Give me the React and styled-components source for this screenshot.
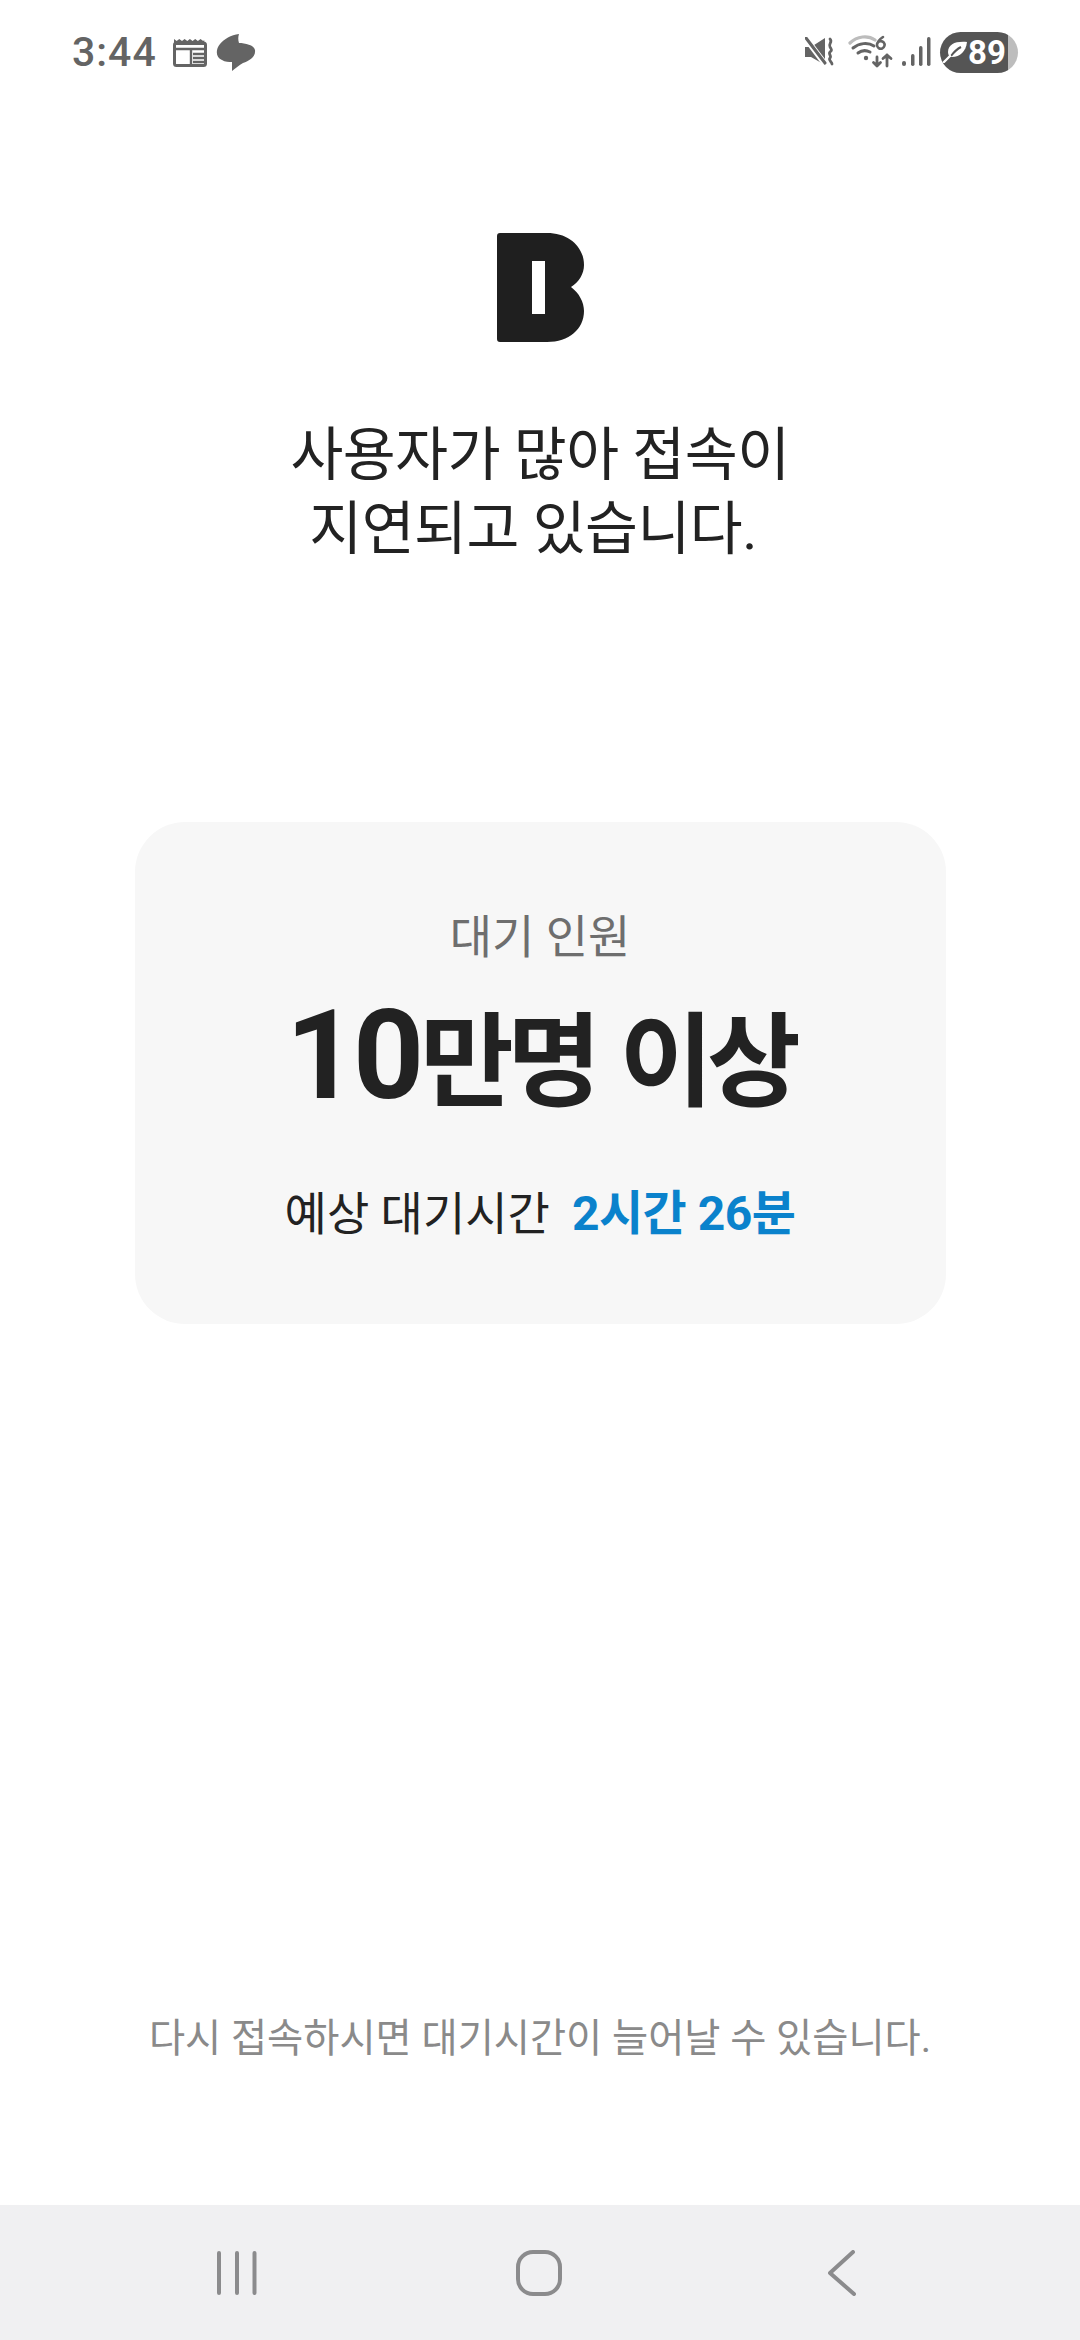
import styled, { createGlobalStyle } from "styled-components";

const GlobalStyle = createGlobalStyle`
  html, body {
    margin: 0;
    padding: 0;
    background: #fff;
  }
  * {
    box-sizing: border-box;
  }
`;

const Screen = styled.div`
  width: 1080px;
  height: 2340px;
  display: flex;
  flex-direction: column;
  background: #fff;
  font-family: Roboto, "Noto Sans CJK KR", sans-serif;
  overflow: hidden;
`;

const StatusBar = styled.header`
  height: 104px;
  display: flex;
  align-items: center;
  justify-content: space-between;
  padding: 0 62px 0 72px;
`;

const StatusGroup = styled.div`
  display: flex;
  align-items: center;
`;

const Time = styled.span`
  font-size: 41px;
  font-weight: 500;
  letter-spacing: 1px;
  color: #646464;
  margin-right: 16px;
`;

const Battery = styled.div`
  width: 78px;
  height: 41px;
  margin-left: 8px;
  border-radius: 21px;
  background: linear-gradient(90deg, #555 87%, #bdbdbd 87%);
  display: flex;
  align-items: center;
  padding-left: 3px;
  color: #fff;
  font-size: 33px;
  font-weight: 700;
`;

const Main = styled.main`
  flex: 1;
  display: flex;
  flex-direction: column;
  align-items: center;
  padding-top: 129px;
`;

const Title = styled.h1`
  margin: 77px 0 0;
  font-size: 57.5px;
  font-weight: 400;
  line-height: 74px;
  letter-spacing: -0.5px;
  text-align: center;
  color: #222;
`;

const Card = styled.section`
  width: 811px;
  height: 502px;
  margin-top: 255px;
  border-radius: 50px;
  background: #f7f7f7;
  display: flex;
  flex-direction: column;
  align-items: center;
  padding-top: 82px;
`;

const CardLabel = styled.div`
  font-size: 46px;
  line-height: 66px;
  color: #6e6e6e;
`;

const CardCount = styled.div`
  margin-top: 24px;
  font-size: 102px;
  font-weight: 700;
  line-height: 124px;
  letter-spacing: -6.5px;
  word-spacing: 6px;
  color: #222;
`;

const CountDigits = styled.span`
  font-size: 124px;
  letter-spacing: -4px;
`;

const CardWait = styled.div`
  margin-top: 56px;
  display: flex;
  gap: 22px;
  font-size: 46px;
  line-height: 66px;
  color: #222;
`;

const WaitTime = styled.span`
  font-size: 48px;
  font-weight: 700;
  letter-spacing: -0.5px;
  color: #0a82cc;
`;

const Notice = styled.p`
  margin: auto 0 0;
  padding-bottom: 138px;
  font-size: 39.3px;
  line-height: 56px;
  color: #8a8a8a;
`;

const NavBar = styled.nav`
  height: 135px;
  display: grid;
  grid-template-columns: 300px 312px auto;
  align-items: center;
  padding-left: 216px;
  background: #f0f0f2;
`;

function CalendarIcon() {
  return (
    <svg width="34" height="30" viewBox="0 0 34 30" fill="none" stroke="#646464">
      <path d="M1 2l2.700 2 2.600-2 2.700 2 2.600-2 2.700 2 2.600-2 2.700 2 2.600-2 2.700 2 2.600-2 2.700 2 1-1V8H1z" fill="#646464" stroke="none" />
      <rect x="1.500" y="6" width="31" height="22.500" rx="2" strokeWidth="3" />
      <path d="M1.500 12h31M18 12v16M20 17h12M20 21h12M20 25h12" strokeWidth="2.400" />
    </svg>
  );
}

function ChatIcon() {
  return (
    <svg width="40" height="37" viewBox="0 0 40 37" fill="#646464" style={{ marginLeft: 9 }}>
      <path d="M23 0C15 1 8 5 4 10C-1 16 0 24 6 26C9 28 13 28 16 28L16 37C20 34 23 31 27 29C33 27 40 23 39 16C38 11 29 9 23 9C22 6 22 3 23 0Z" />
    </svg>
  );
}

function MuteIcon() {
  return (
    <svg width="30" height="30" viewBox="0 0 30 30" fill="none">
      <path d="M0 10h6L20 1v27L6 20H0z" fill="#646464" />
      <path d="M2 3l18 24" stroke="#fff" strokeWidth="6" />
      <path d="M1 1l19 25" stroke="#646464" strokeWidth="3" strokeLinecap="round" />
      <path d="M25 2c3 3-2 5 0 8s2 3 0 5 2 4 0 6 2 4 2 6" stroke="#646464" strokeWidth="2.800" strokeLinecap="round" />
    </svg>
  );
}

function WifiIcon() {
  return (
    <svg width="46" height="34" viewBox="0 0 46 34" fill="none" style={{ marginLeft: 13 }}>
      <path d="M2 8C9 1 20 0 27 5" stroke="#bcbcbc" strokeWidth="3.200" strokeLinecap="round" />
      <path d="M5 13C11 8 20 7 26 11M10 18C14 15 18 15 22 17" stroke="#646464" strokeWidth="3" strokeLinecap="round" />
      <circle cx="18" cy="23" r="2.200" fill="#646464" />
      <path d="M29 22v9M25.500 27.500L29 31l3.500-3.500M39 31V20M35 23.500L39 20l4 3.500" stroke="#646464" strokeWidth="2.800" strokeLinecap="round" strokeLinejoin="round" />
      <path d="M35 2C32 4 29 7 29 10a3.800 3.800 0 1 0 .5-2" stroke="#646464" strokeWidth="2.600" strokeLinecap="round" />
    </svg>
  );
}

function SignalIcon() {
  return (
    <svg width="30" height="30" viewBox="0 0 30 30" fill="#646464" style={{ marginLeft: 8 }}>
      <rect x="0" y="24" width="4" height="5" rx="2" />
      <rect x="9" y="17" width="3.500" height="12" rx="1.700" />
      <rect x="17" y="9" width="3.500" height="20" rx="1.700" />
      <rect x="25" y="0" width="3.500" height="29" rx="1.700" />
    </svg>
  );
}

function LeafIcon() {
  return (
    <svg width="25" height="22" viewBox="0 0 25 22" fill="none" style={{ flexShrink: 0 }}>
      <path d="M24 1C13 0 5 3 5 11c0 2 1 4 2 5 9 1 16-5 17-15z" fill="#fff" />
      <path d="M8 15c3-4 6-7 10-9" stroke="#555" strokeWidth="2" />
      <path d="M1 21c2-2 4-4 6-6" stroke="#fff" strokeWidth="2.400" strokeLinecap="round" />
    </svg>
  );
}

function BrandLogo() {
  return (
    <svg width="87" height="109" viewBox="0 0 87 109">
      <path
        fillRule="evenodd"
        fill="#1f1f1f"
        d="M3 0H50C72 0 87 14 87 32C87 41 82 49 74 54C82 60 87 69 87 78C87 96 72 109 50 109H3Q0 109 0 106V3Q0 0 3 0ZM35 28V81H48V28Z"
      />
    </svg>
  );
}

function RecentsIcon() {
  return (
    <svg width="42" height="44" viewBox="0 0 42 44" fill="none" stroke="#8b8b8d" strokeWidth="4" strokeLinecap="round">
      <path d="M3 2v40M21 2v40M38.500 2v40" />
    </svg>
  );
}

function HomeIcon() {
  return (
    <svg width="46" height="46" viewBox="0 0 46 46" fill="none" stroke="#8b8b8d" strokeWidth="4">
      <rect x="2" y="2" width="42" height="42" rx="15" />
    </svg>
  );
}

function BackIcon() {
  return (
    <svg width="28" height="46" viewBox="0 0 28 46" fill="none" stroke="#8b8b8d" strokeWidth="4" strokeLinecap="round" strokeLinejoin="round">
      <path d="M25 2L2 23l24 21" />
    </svg>
  );
}

function App() {
  return (
    <Screen>
      <GlobalStyle />
      <StatusBar>
        <StatusGroup>
          <Time>3:44</Time>
          <CalendarIcon />
          <ChatIcon />
        </StatusGroup>
        <StatusGroup>
          <MuteIcon />
          <WifiIcon />
          <SignalIcon />
          <Battery>
            <LeafIcon />
            89
          </Battery>
        </StatusGroup>
      </StatusBar>

      <Main>
        <BrandLogo />
        <Title>
          사용자가 많아 접속이
          <br />
          지연되고 있습니다.&nbsp;
        </Title>

        <Card>
          <CardLabel>대기 인원</CardLabel>
          <CardCount>
            <CountDigits>10</CountDigits>만명 이상
          </CardCount>
          <CardWait>
            <span>예상 대기시간</span>
            <WaitTime>2시간 26분</WaitTime>
          </CardWait>
        </Card>

        <Notice>다시 접속하시면 대기시간이 늘어날 수 있습니다.</Notice>
      </Main>

      <NavBar>
        <RecentsIcon />
        <HomeIcon />
        <BackIcon />
      </NavBar>
    </Screen>
  );
}

export default App;
